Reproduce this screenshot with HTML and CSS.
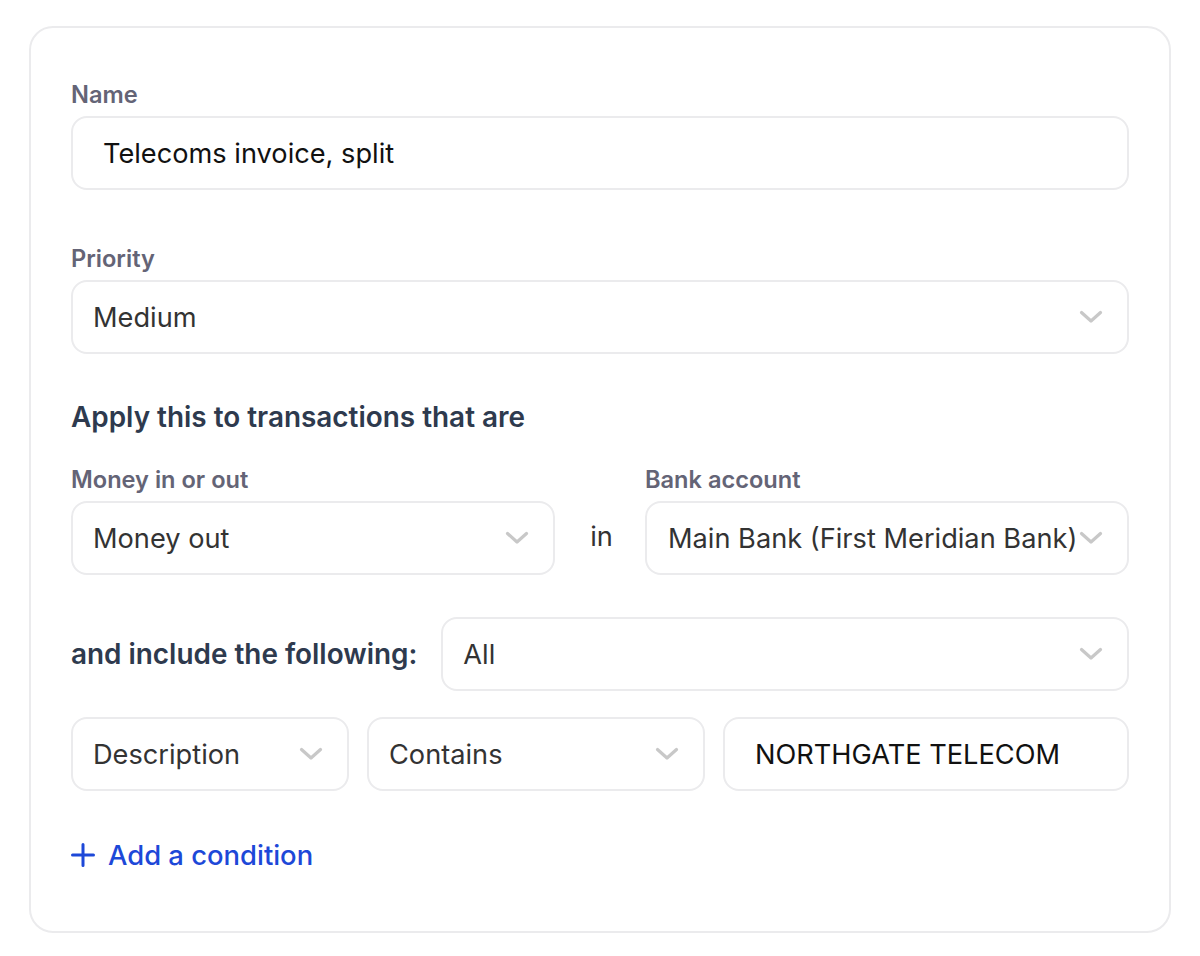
FILE: index.html
```html
<!DOCTYPE html>
<html lang="en">
<head>
<meta charset="utf-8">
<title>Rule</title>
<link rel="stylesheet" href="styles.css">
</head>
<body>
<div class="page">
  <div class="card">
    <div class="field">
      <div class="label">Name</div>
      <div class="control text-input">Telecoms invoice, split</div>
    </div>

    <div class="field field-priority">
      <div class="label">Priority</div>
      <div class="control select">
        <span class="value">Medium</span>
        <svg class="chev" viewBox="0 0 24 14" width="24" height="14"><path d="M2.5 2.5 L12 11 L21.5 2.5" fill="none" stroke="#c8c8c8" stroke-width="3.2" stroke-linecap="round" stroke-linejoin="round"/></svg>
      </div>
    </div>

    <h2 class="heading">Apply this to transactions that are</h2>

    <div class="account-grid">
      <div class="label">Money in or out</div>
      <div></div>
      <div class="label">Bank account</div>
      <div class="control select">
        <span class="value">Money out</span>
        <svg class="chev" viewBox="0 0 24 14" width="24" height="14"><path d="M2.5 2.5 L12 11 L21.5 2.5" fill="none" stroke="#c8c8c8" stroke-width="3.2" stroke-linecap="round" stroke-linejoin="round"/></svg>
      </div>
      <div class="in-word">in</div>
      <div class="control select select-tight">
        <span class="value">Main Bank (First Meridian Bank)</span>
        <svg class="chev" viewBox="0 0 24 14" width="24" height="14"><path d="M2.5 2.5 L12 11 L21.5 2.5" fill="none" stroke="#c8c8c8" stroke-width="3.2" stroke-linecap="round" stroke-linejoin="round"/></svg>
      </div>
    </div>

    <div class="include-row">
      <div class="heading inline">and include the following:</div>
      <div class="control select grow">
        <span class="value">All</span>
        <svg class="chev" viewBox="0 0 24 14" width="24" height="14"><path d="M2.5 2.5 L12 11 L21.5 2.5" fill="none" stroke="#c8c8c8" stroke-width="3.2" stroke-linecap="round" stroke-linejoin="round"/></svg>
      </div>
    </div>

    <div class="condition-row">
      <div class="control select">
        <span class="value">Description</span>
        <svg class="chev" viewBox="0 0 24 14" width="24" height="14"><path d="M2.5 2.5 L12 11 L21.5 2.5" fill="none" stroke="#c8c8c8" stroke-width="3.2" stroke-linecap="round" stroke-linejoin="round"/></svg>
      </div>
      <div class="control select">
        <span class="value">Contains</span>
        <svg class="chev" viewBox="0 0 24 14" width="24" height="14"><path d="M2.5 2.5 L12 11 L21.5 2.5" fill="none" stroke="#c8c8c8" stroke-width="3.2" stroke-linecap="round" stroke-linejoin="round"/></svg>
      </div>
      <div class="control text-input">NORTHGATE TELECOM</div>
    </div>

    <a class="add-link" href="#">
      <svg class="plus" viewBox="0 0 24 24" width="24" height="24"><path d="M12 1.5 V22.5 M1.5 12 H22.5" fill="none" stroke="#1d48d8" stroke-width="3" stroke-linecap="round"/></svg>
      <span>Add a condition</span>
    </a>
  </div>
</div>
</body>
</html>
```

FILE: styles.css
```css
* { box-sizing: border-box; }

html, body {
  margin: 0;
  background: #ffffff;
}

body {
  font-family: Inter, "Noto Sans", "Liberation Sans", sans-serif;
  color: #333333;
}

.page {
  padding: 26px 29px 0 29px;
}

.card {
  width: 1142px;
  min-height: 907px;
  border: 2px solid #ebebed;
  border-radius: 24px;
  padding: 50px 40px 40px 40px;
  background: #ffffff;
}

.label {
  font-size: 23.6px;
  line-height: 30px;
  font-weight: 600;
  color: #646476;
  margin-bottom: 8px;
  padding-top: 2px;
  height: 30px;
  white-space: nowrap;
}

.control {
  height: 74px;
  border: 2px solid #ebebed;
  border-radius: 16px;
  display: flex;
  align-items: center;
  font-size: 27.2px;
  color: #333333;
  background: #ffffff;
  min-width: 0;
}

.text-input {
  padding: 0 30px;
  color: #111111;
}

.select {
  padding: 0 24px 0 20px;
  justify-content: space-between;
}

.select-tight {
  padding-left: 21px;
  padding-right: 24px;
}

.select .value {
  white-space: nowrap;
  min-width: 0;
}

.chev {
  flex: none;
  margin-left: 2px;
}

.field-priority {
  margin-top: 52px;
}

.heading {
  margin: 45px 0 0 0;
  font-size: 27.9px;
  line-height: 36px;
  font-weight: 600;
  color: #2e3a4e;
}

.heading.inline {
  margin: 0;
  white-space: nowrap;
}

.account-grid {
  margin-top: 28px;
  display: grid;
  grid-template-columns: minmax(0, 1fr) 90px minmax(0, 1fr);
  grid-template-rows: auto 74px;
}

.in-word {
  font-size: 27.2px;
  color: #333333;
  display: flex;
  align-items: center;
  justify-content: center;
  padding-bottom: 4px;
  padding-left: 3px;
}

.include-row {
  margin-top: 42px;
  display: flex;
  align-items: center;
  gap: 24px;
}

.grow {
  flex: 1;
}

.condition-row {
  margin-top: 26px;
  display: grid;
  grid-template-columns: 278px 338px minmax(0, 1fr);
  gap: 18px;
}

.add-link {
  margin-top: 46px;
  display: inline-flex;
  align-items: center;
  gap: 13px;
  font-size: 27.4px;
  line-height: 36px;
  font-weight: 500;
  color: #1d48d8;
  text-decoration: none;
}

.plus {
  flex: none;
}
```
